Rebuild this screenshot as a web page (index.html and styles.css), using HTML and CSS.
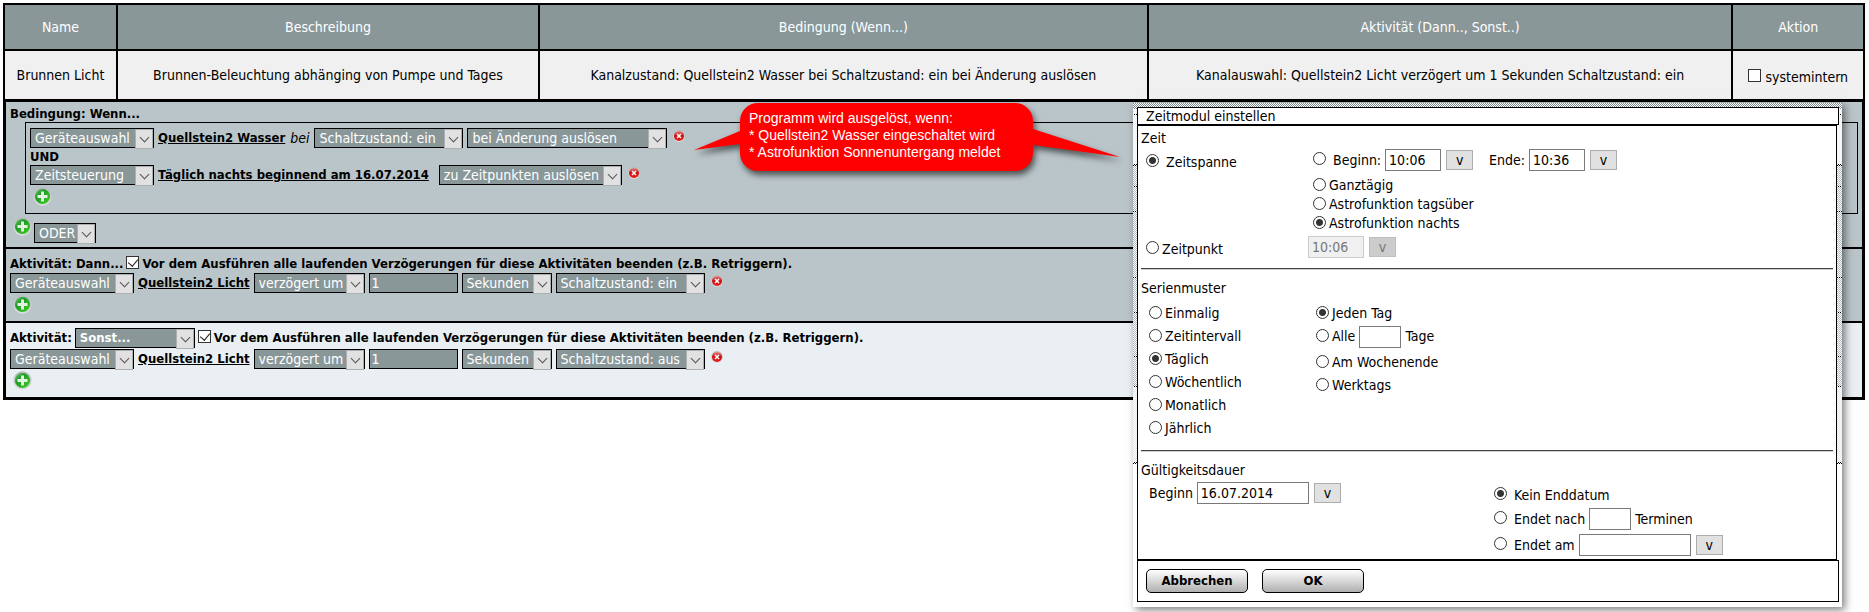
FILE: index.html
```html
<!DOCTYPE html>
<html lang="de">
<head>
<meta charset="utf-8">
<title>Programme</title>
<link rel="stylesheet" href="styles.css">
</head>
<body>
<svg width="0" height="0" class="defs" aria-hidden="true">
  <defs>
    <linearGradient id="rim" x1="0" y1="0" x2="0" y2="1"><stop offset="0" stop-color="#b4babb"/><stop offset="1" stop-color="#dde0e0"/></linearGradient>
    <linearGradient id="green" x1="0" y1="0" x2="1" y2="1"><stop offset="0" stop-color="#7fc87c"/><stop offset=".35" stop-color="#1d9a24"/><stop offset="1" stop-color="#3fd424"/></linearGradient>
    <linearGradient id="red" x1="0" y1="0" x2="0" y2="1"><stop offset="0" stop-color="#e88a8a"/><stop offset=".45" stop-color="#c81414"/><stop offset="1" stop-color="#f01818"/></linearGradient>
    <symbol id="plus" viewBox="0 0 19 19">
      <circle cx="9.5" cy="9.5" r="9.2" fill="url(#rim)"/>
      <circle cx="9.5" cy="9.5" r="7.6" fill="url(#green)"/>
      <path d="M8 4.5h3V8h3.500v3H11v3.500H8V11H4.500V8H8z" fill="#e4f0e2"/>
    </symbol>
    <symbol id="del" viewBox="0 0 12 12">
      <circle cx="6" cy="6" r="5.900" fill="url(#rim)"/>
      <circle cx="6" cy="6" r="5" fill="url(#red)"/>
      <path d="M4 4l4 4M8 4l-4 4" stroke="#fff" stroke-width="1.500"/>
    </symbol>
  </defs>
</svg>

<main class="page">
  <table class="programs">
    <colgroup><col class="c-name"><col class="c-desc"><col class="c-cond"><col class="c-act"><col></colgroup>
    <thead>
      <tr><th>Name</th><th>Beschreibung</th><th>Bedingung (Wenn...)</th><th>Aktivität (Dann.., Sonst..)</th><th>Aktion</th></tr>
    </thead>
    <tbody>
      <tr>
        <td>Brunnen Licht</td>
        <td>Brunnen-Beleuchtung abhänging von Pumpe und Tages</td>
        <td>Kanalzustand: Quellstein2 Wasser bei Schaltzustand: ein bei Änderung auslösen</td>
        <td>Kanalauswahl: Quellstein2 Licht verzögert um 1 Sekunden Schaltzustand: ein</td>
        <td><label class="intern"><input type="checkbox" class="check"> systemintern</label></td>
      </tr>
    </tbody>
  </table>

  <div class="details">
    <section class="rule cond">
      <h2 class="title">Bedingung: Wenn...</h2>
      <div class="group">
        <div class="line">
          <span class="sel w-device"><select aria-label="Typ"><option>Geräteauswahl</option></select></span>
          <a href="#" class="link">Quellstein2 Wasser</a>
          <i class="at">bei</i>
          <span class="sel w-state"><select aria-label="Zustand"><option>Schaltzustand: ein</option></select></span>
          <span class="sel w-change"><select aria-label="Auslöser"><option>bei Änderung auslösen</option></select></span>
          <button class="icon del" aria-label="Löschen"><svg><use href="#del"/></svg></button>
        </div>
        <div class="and">UND</div>
        <div class="line">
          <span class="sel w-device"><select aria-label="Typ"><option>Zeitsteuerung</option></select></span>
          <a href="#" class="link time-link">Täglich nachts beginnend am 16.07.2014</a>
          <span class="sel w-times"><select aria-label="Auslöser"><option>zu Zeitpunkten auslösen</option></select></span>
          <button class="icon del" aria-label="Löschen"><svg><use href="#del"/></svg></button>
        </div>
        <button class="icon plus" aria-label="Hinzufügen"><svg><use href="#plus"/></svg></button>
      </div>
      <div class="or">
        <button class="icon plus" aria-label="Gruppe hinzufügen"><svg><use href="#plus"/></svg></button>
        <span class="sel w-or"><select aria-label="Verknüpfung"><option>ODER</option></select></span>
      </div>
    </section>

    <section class="rule then">
      <div class="title head">Aktivität: Dann...
        <label class="stop"><input type="checkbox" class="check" checked> Vor dem Ausführen alle laufenden Verzögerungen für diese Aktivitäten beenden (z.B. Retriggern).</label>
      </div>
      <div class="line">
        <span class="sel w-device"><select aria-label="Typ"><option>Geräteauswahl</option></select></span>
        <a href="#" class="link">Quellstein2 Licht</a>
        <span class="sel w-delay"><select aria-label="Verzögerung"><option>verzögert um</option></select></span>
        <input class="num" type="text" value="1" aria-label="Dauer">
        <span class="sel w-unit"><select aria-label="Einheit"><option>Sekunden</option></select></span>
        <span class="sel w-state"><select aria-label="Zustand"><option>Schaltzustand: ein</option></select></span>
        <button class="icon del" aria-label="Löschen"><svg><use href="#del"/></svg></button>
      </div>
      <button class="icon plus" aria-label="Hinzufügen"><svg><use href="#plus"/></svg></button>
    </section>

    <section class="rule else">
      <div class="title head tall">Aktivität:
        <span class="sel w-else"><select aria-label="Zweig"><option>Sonst...</option></select></span>
        <label class="stop"><input type="checkbox" class="check" checked> Vor dem Ausführen alle laufenden Verzögerungen für diese Aktivitäten beenden (z.B. Retriggern).</label>
      </div>
      <div class="line">
        <span class="sel w-device"><select aria-label="Typ"><option>Geräteauswahl</option></select></span>
        <a href="#" class="link">Quellstein2 Licht</a>
        <span class="sel w-delay"><select aria-label="Verzögerung"><option>verzögert um</option></select></span>
        <input class="num" type="text" value="1" aria-label="Dauer">
        <span class="sel w-unit"><select aria-label="Einheit"><option>Sekunden</option></select></span>
        <span class="sel w-state"><select aria-label="Zustand"><option>Schaltzustand: aus</option></select></span>
        <button class="icon del" aria-label="Löschen"><svg><use href="#del"/></svg></button>
      </div>
      <button class="icon plus" aria-label="Hinzufügen"><svg><use href="#plus"/></svg></button>
    </section>
  </div>
</main>

<aside class="callout">
  <svg class="bubble" viewBox="0 0 430 68" aria-hidden="true">
    <path d="M68 0H325A18 18 0 0 1 343 18V26L430 54L343 42V50A18 18 0 0 1 325 68H68A18 18 0 0 1 50 50V41L4 47L50 28V18A18 18 0 0 1 68 0Z" fill="#f00"/>
  </svg>
  <p class="note">Programm wird ausgelöst, wenn:<br>* Quellstein2 Wasser eingeschaltet wird<br>* Astrofunktion Sonnenuntergang meldet</p>
</aside>

<div class="dialog" role="dialog" aria-labelledby="dlg">
  <h1 class="bar" id="dlg">Zeitmodul einstellen</h1>
  <form class="content">
    <div class="caption">Zeit</div>
    <div class="row span">
      <label class="opt wide main"><input type="radio" name="mode" checked> Zeitspanne</label>
      <div class="fields">
        <label class="opt wide"><input type="radio" name="range"> Beginn:</label>
        <input class="box short" type="text" value="10:06" aria-label="Beginn">
        <button type="button" class="pick">v</button>
        <label class="end" for="ende">Ende:</label>
        <input id="ende" class="box short" type="text" value="10:36">
        <button type="button" class="pick">v</button>
      </div>
    </div>
    <div class="ranges">
      <label class="opt"><input type="radio" name="range"> Ganztägig</label>
      <label class="opt"><input type="radio" name="range"> Astrofunktion tagsüber</label>
      <label class="opt"><input type="radio" name="range" checked> Astrofunktion nachts</label>
    </div>
    <div class="row point">
      <label class="opt main"><input type="radio" name="mode2"> Zeitpunkt</label>
      <div class="fields">
        <input class="box short" type="text" value="10:06" aria-label="Zeitpunkt" disabled>
        <button type="button" class="pick" disabled>v</button>
      </div>
    </div>
    <hr>
    <div class="caption">Serienmuster</div>
    <div class="series">
      <div class="list">
        <label class="opt"><input type="radio" name="pattern"> Einmalig</label>
        <label class="opt"><input type="radio" name="pattern"> Zeitintervall</label>
        <label class="opt"><input type="radio" name="pattern" checked> Täglich</label>
        <label class="opt"><input type="radio" name="pattern"> Wöchentlich</label>
        <label class="opt"><input type="radio" name="pattern"> Monatlich</label>
        <label class="opt"><input type="radio" name="pattern"> Jährlich</label>
      </div>
      <div class="list">
        <label class="opt"><input type="radio" name="day" checked> Jeden Tag</label>
        <div class="every">
          <label class="opt"><input type="radio" name="day"> Alle</label>
          <input class="box tiny" type="text" aria-label="Anzahl Tage">
          <span>Tage</span>
        </div>
        <label class="opt"><input type="radio" name="day"> Am Wochenende</label>
        <label class="opt"><input type="radio" name="day"> Werktags</label>
      </div>
    </div>
    <hr>
    <div class="caption">Gültigkeitsdauer</div>
    <div class="validity">
      <div class="fields">
        <label for="start">Beginn</label>
        <input id="start" class="box date" type="text" value="16.07.2014">
        <button type="button" class="pick">v</button>
      </div>
      <div class="ends">
        <div class="fields first"><label class="opt wide"><input type="radio" name="end" checked> Kein Enddatum</label></div>
        <div class="fields">
          <label class="opt wide"><input type="radio" name="end"> Endet nach</label>
          <input class="box tiny" type="text" aria-label="Anzahl Termine">
          <span>Terminen</span>
        </div>
        <div class="fields">
          <label class="opt wide"><input type="radio" name="end"> Endet am</label>
          <input class="box date" type="text" aria-label="Enddatum">
          <button type="button" class="pick">v</button>
        </div>
      </div>
    </div>
  </form>
  <div class="foot">
    <button class="btn">Abbrechen</button>
    <button class="btn">OK</button>
  </div>
</div>
</body>
</html>
```
FILE: styles.css
```css
* { box-sizing: border-box; }

body {
  margin: 0;
  min-height: 100vh;
  position: relative;
  background: #fff;
  color: #000;
  font: 14px/16px "DejaVu Sans Condensed", "DejaVu Sans", sans-serif;
}

input, select, button { font: inherit; color: inherit; margin: 0; }
.defs { position: absolute; }
.page { padding: 3px 4px 0 3px; }

/* program table */
.programs {
  width: 100%;
  table-layout: fixed;
  border-spacing: 2px;
  background: #000;
}
.c-name { width: 6%; }
.c-desc { width: 22.7%; }
.c-cond { width: 32.8%; }
.c-act { width: 31.5%; }
.programs th, .programs td { padding: 0; text-align: center; font-weight: normal; }
.programs th { height: 44px; background: #899799; color: #fff; }
.programs td { height: 48px; background: #f0f0f0; }
.intern { display: inline-flex; gap: 4px; align-items: center; padding-top: 3px; }
.intern .check { margin-bottom: 3px; }

.check {
  appearance: none;
  position: relative;
  flex: none;
  width: 13px;
  height: 13px;
  border: 1px solid #333;
  background: #fff;
}
.check:checked::after {
  content: "";
  position: absolute;
  left: 3px;
  top: 0;
  width: 5px;
  height: 8px;
  border: solid #222;
  border-width: 0 1px 1px 0;
  transform: rotate(40deg);
}

/* rule sections */
.details { border: 3px solid #000; border-top-width: 1px; }
.rule { padding: 5px 4px 7px; background: #bac5c9; }
.rule + .rule { border-top: 2px solid #000; }
.rule.cond { padding: 4px; }
.rule.else { background: #e9eff2; }
.title { margin: 0; font-size: 13px; font-weight: bold; line-height: 16px; }
.head { display: flex; align-items: center; gap: 3px; height: 19px; }
.head.tall { height: 20px; margin-bottom: 1px; }
.stop { display: flex; align-items: center; gap: 3px; }
.stop .check { margin-bottom: 3px; }
.group { margin-left: 15px; padding: 5px 4px 7px; border: 1px solid #000; }
.line { display: flex; align-items: center; gap: 4px; height: 20px; }
.and { font-size: 13px; font-weight: bold; line-height: 17px; }
.link { color: #000; font-size: 13px; font-weight: bold; }
.time-link { margin-right: 6px; }
.at { margin: 0 1px; }
.or { display: flex; align-items: flex-start; gap: 2px; padding-top: 2px; }
.or .sel { margin-top: 7px; }

.icon { display: block; padding: 0; border: 0; background: none; }
.icon svg { display: block; width: 100%; height: 100%; }
.plus { width: 19px; height: 19px; margin: 2px 0 0 3px; }
.or .plus { margin-top: 1px; }
.del { width: 12px; height: 12px; margin: 0 0 4px 2px; }

.sel { position: relative; display: block; height: 20px; color: #fff; }
.sel select {
  appearance: none;
  display: block;
  width: 100%;
  height: 100%;
  padding: 0 16px 0 4px;
  border: 1px solid #000;
  border-radius: 0;
  background: #899799;
}
.sel::before {
  content: "";
  position: absolute;
  right: 1px;
  top: 1px;
  width: 16px;
  height: 18px;
  border: 1px solid #acb0b1;
  background: #e1e1e1;
  pointer-events: none;
}
.sel::after {
  content: "";
  position: absolute;
  right: 6px;
  top: 6px;
  width: 6px;
  height: 6px;
  border: solid #555;
  border-width: 0 1px 1px 0;
  transform: rotate(45deg);
  pointer-events: none;
}
.w-device { width: 124px; }
.w-state { width: 149px; }
.w-change { width: 200px; }
.w-times { width: 183px; }
.w-or { width: 62px; }
.w-delay { width: 111px; }
.w-unit { width: 90px; }
.w-else { width: 120px; }
.num { width: 89px; height: 20px; padding: 0 2px; border: 1px solid #000; background: #899799; color: #fff; }

/* callout */
.callout {
  position: absolute;
  left: 690px;
  top: 103px;
  width: 430px;
  padding: 7px 0 10px 59px;
  color: #fff;
}
.bubble {
  position: absolute;
  left: 0;
  top: 0;
  width: 430px;
  height: 68px;
  overflow: visible;
  filter: drop-shadow(2px 4px 3px rgba(0, 0, 0, .6));
}
.note { position: relative; margin: 0; font: 14px/17px "Liberation Sans", Arial, sans-serif; }

/* dialog */
.dialog {
  position: absolute;
  right: 27px;
  top: 103px;
  width: 709px;
  padding: 4px 3px 5px 4px;
  background:
    repeating-conic-gradient(#fff 0 25%, transparent 0 50%) 0 0 / 2px 2px,
    linear-gradient(#000, #000) 0 11px / 100% 1px no-repeat,
    linear-gradient(#000, #000) 0 61px / 100% 2px no-repeat,
    linear-gradient(#000, #000) 0 83px / 100% 1px no-repeat,
    linear-gradient(#000, #000) 0 108px / 100% 1px no-repeat,
    linear-gradient(#000, #000) 0 174px / 100% 1px no-repeat,
    linear-gradient(#000, #000) 0 209px / 100% 1px no-repeat,
    linear-gradient(#000, #000) 0 253px / 100% 1px no-repeat,
    linear-gradient(#000, #000) 0 283px / 100% 1px no-repeat,
    linear-gradient(#000, #000) 0 359px / 100% 2px no-repeat,
    linear-gradient(#7d8b8e 6px, #eee 6px 61px, #aebbbf 61px 283px, #dfe8ea 283px 359px, #fff 359px);
  box-shadow: 3px 3px 8px rgba(0, 0, 0, .5);
}
.bar {
  margin: 0;
  height: 18px;
  padding-left: 8px;
  border: 1px solid #000;
  background: #fff;
  font-size: 14px;
  font-weight: normal;
  line-height: 16px;
}
.content {
  margin-right: 2px;
  padding: 4px 3px 1px;
  border: 1px solid #000;
  background: #fff;
}
.content hr { height: 2px; margin: 10px 0; border: 0; border-top: 1px solid #444; border-bottom: 1px solid #d0d0d0; }

.opt { display: flex; align-items: center; gap: 3px; }
.opt.wide { gap: 7px; }
.opt input {
  appearance: none;
  flex: none;
  width: 13px;
  height: 13px;
  margin-bottom: 3px;
  border: 1px solid #333;
  border-radius: 50%;
  background: #fff;
}
.opt input:checked { background: radial-gradient(circle, #333 0 3px, #fff 4px); }

.row { display: grid; grid-template-columns: 167px 1fr; align-items: center; padding-left: 5px; }
.span { margin-top: 3px; }
.main { padding-top: 3px; }
.fields { display: flex; align-items: center; }
.box { height: 22px; margin-left: 4px; padding: 0 3px; border: 1px solid #7a7a7a; background: #fff; }
.short { width: 56px; }
.tiny { width: 42px; margin-right: 4px; }
.date { width: 112px; }
.box:disabled { border-color: #ccc; background: #f0f0f0; color: #777; }
.pick { width: 27px; height: 20px; margin-left: 5px; padding: 0; border: 1px solid #adadad; background: #e1e1e1; line-height: 16px; }
.pick:disabled { border-color: #bfbfbf; background: #ccc; color: #777; }
.end { margin-left: 16px; }
.ranges { padding: 5px 0 3px 172px; line-height: 19px; }
.point { grid-template-columns: 162px 1fr; }
.point .box { margin-left: 0; }
.series { display: grid; grid-template-columns: 167px 1fr; margin-top: 6px; padding-left: 8px; }
.list { line-height: 23px; }
.every { display: flex; align-items: center; height: 26px; padding-bottom: 3px; }
.validity { display: grid; grid-template-columns: 1fr 1fr; align-items: start; margin-top: 4px; padding-left: 8px; }
.ends { padding-left: 3px; }
.ends .fields { height: 26px; }
.ends .first { height: 24px; padding-top: 2px; }

.foot { display: flex; gap: 14px; padding: 8px; border: 1px solid #000; background: #fff; }
.btn {
  width: 102px;
  height: 24px;
  padding: 0;
  border: 1px solid #000;
  border-radius: 5px;
  background: linear-gradient(#fff, #b0b0b0);
  font-size: 13px;
  font-weight: bold;
}
```
